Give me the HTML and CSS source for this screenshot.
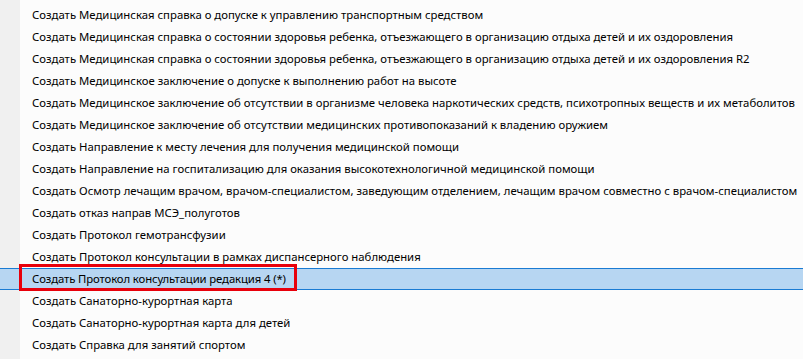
FILE: index.html
```html
<!DOCTYPE html>
<html lang="ru">
<head>
    <meta charset="UTF-8">
    <title>Меню</title>
    <link rel="stylesheet" href="styles.css">
</head>
<body>
    <ul class="menu">
        <li class="menu-item">Создать Медицинская справка о допуске к управлению транспортным средством</li>
        <li class="menu-item">Создать Медицинская справка о состоянии здоровья ребенка, отъезжающего в организацию отдыха детей и их оздоровления</li>
        <li class="menu-item">Создать Медицинская справка о состоянии здоровья ребенка, отъезжающего в организацию отдыха детей и их оздоровления R2</li>
        <li class="menu-item">Создать Медицинское заключение о допуске к выполнению работ на высоте</li>
        <li class="menu-item">Создать Медицинское заключение об отсутствии в организме человека наркотических средств, психотропных веществ и их метаболитов</li>
        <li class="menu-item">Создать Медицинское заключение об отсутствии медицинских противопоказаний к владению оружием</li>
        <li class="menu-item">Создать Направление к месту лечения для получения медицинской помощи</li>
        <li class="menu-item">Создать Направление на госпитализацию для оказания высокотехнологичной медицинской помощи</li>
        <li class="menu-item">Создать Осмотр лечащим врачом, врачом-специалистом, заведующим отделением, лечащим врачом совместно с врачом-специалистом</li>
        <li class="menu-item">Создать отказ направ МСЭ_полуготов</li>
        <li class="menu-item">Создать Протокол гемотрансфузии</li>
        <li class="menu-item">Создать Протокол консультации в рамках диспансерного наблюдения</li>
        <li class="menu-item selected"><span class="mark">Создать Протокол консультации редакция 4 (*)</span></li>
        <li class="menu-item">Создать Санаторно-курортная карта</li>
        <li class="menu-item">Создать Санаторно-курортная карта для детей</li>
        <li class="menu-item">Создать Справка для занятий спортом</li>
    </ul>
</body>
</html>
```

FILE: styles.css
```css
/* Context menu */
body {
    margin: 0;
    height: 359px;
    overflow: hidden;
    font-family: 'Segoe UI', 'Noto Sans', sans-serif;
    font-size: 11.35px;
    color: #000;
    background: linear-gradient(to right, #f0f0f0 20px, #fcfcfc 20px);
}
.menu {
    list-style: none;
    margin: 0;
    padding: 4px 0 0 0;
}
.menu-item {
    height: 22px;
    line-height: 22px;
    padding-left: 32px;
    white-space: nowrap;
    box-sizing: border-box;
}
.menu-item.selected {
    background: #b7d6f2;
    border-top: 1px solid #1a7bd3;
    border-bottom: 1px solid #1a7bd3;
    line-height: 20px;
}
/* Red outline around the chosen item */
.mark {
    display: inline-block;
    height: 20px;
    position: relative;
    letter-spacing: -0.12px;
}
.mark::after {
    content: '';
    position: absolute;
    left: -13px;
    right: -11px;
    top: -5px;
    height: 27px;
    box-sizing: border-box;
    border: 3px solid #e8000b;
}
```
